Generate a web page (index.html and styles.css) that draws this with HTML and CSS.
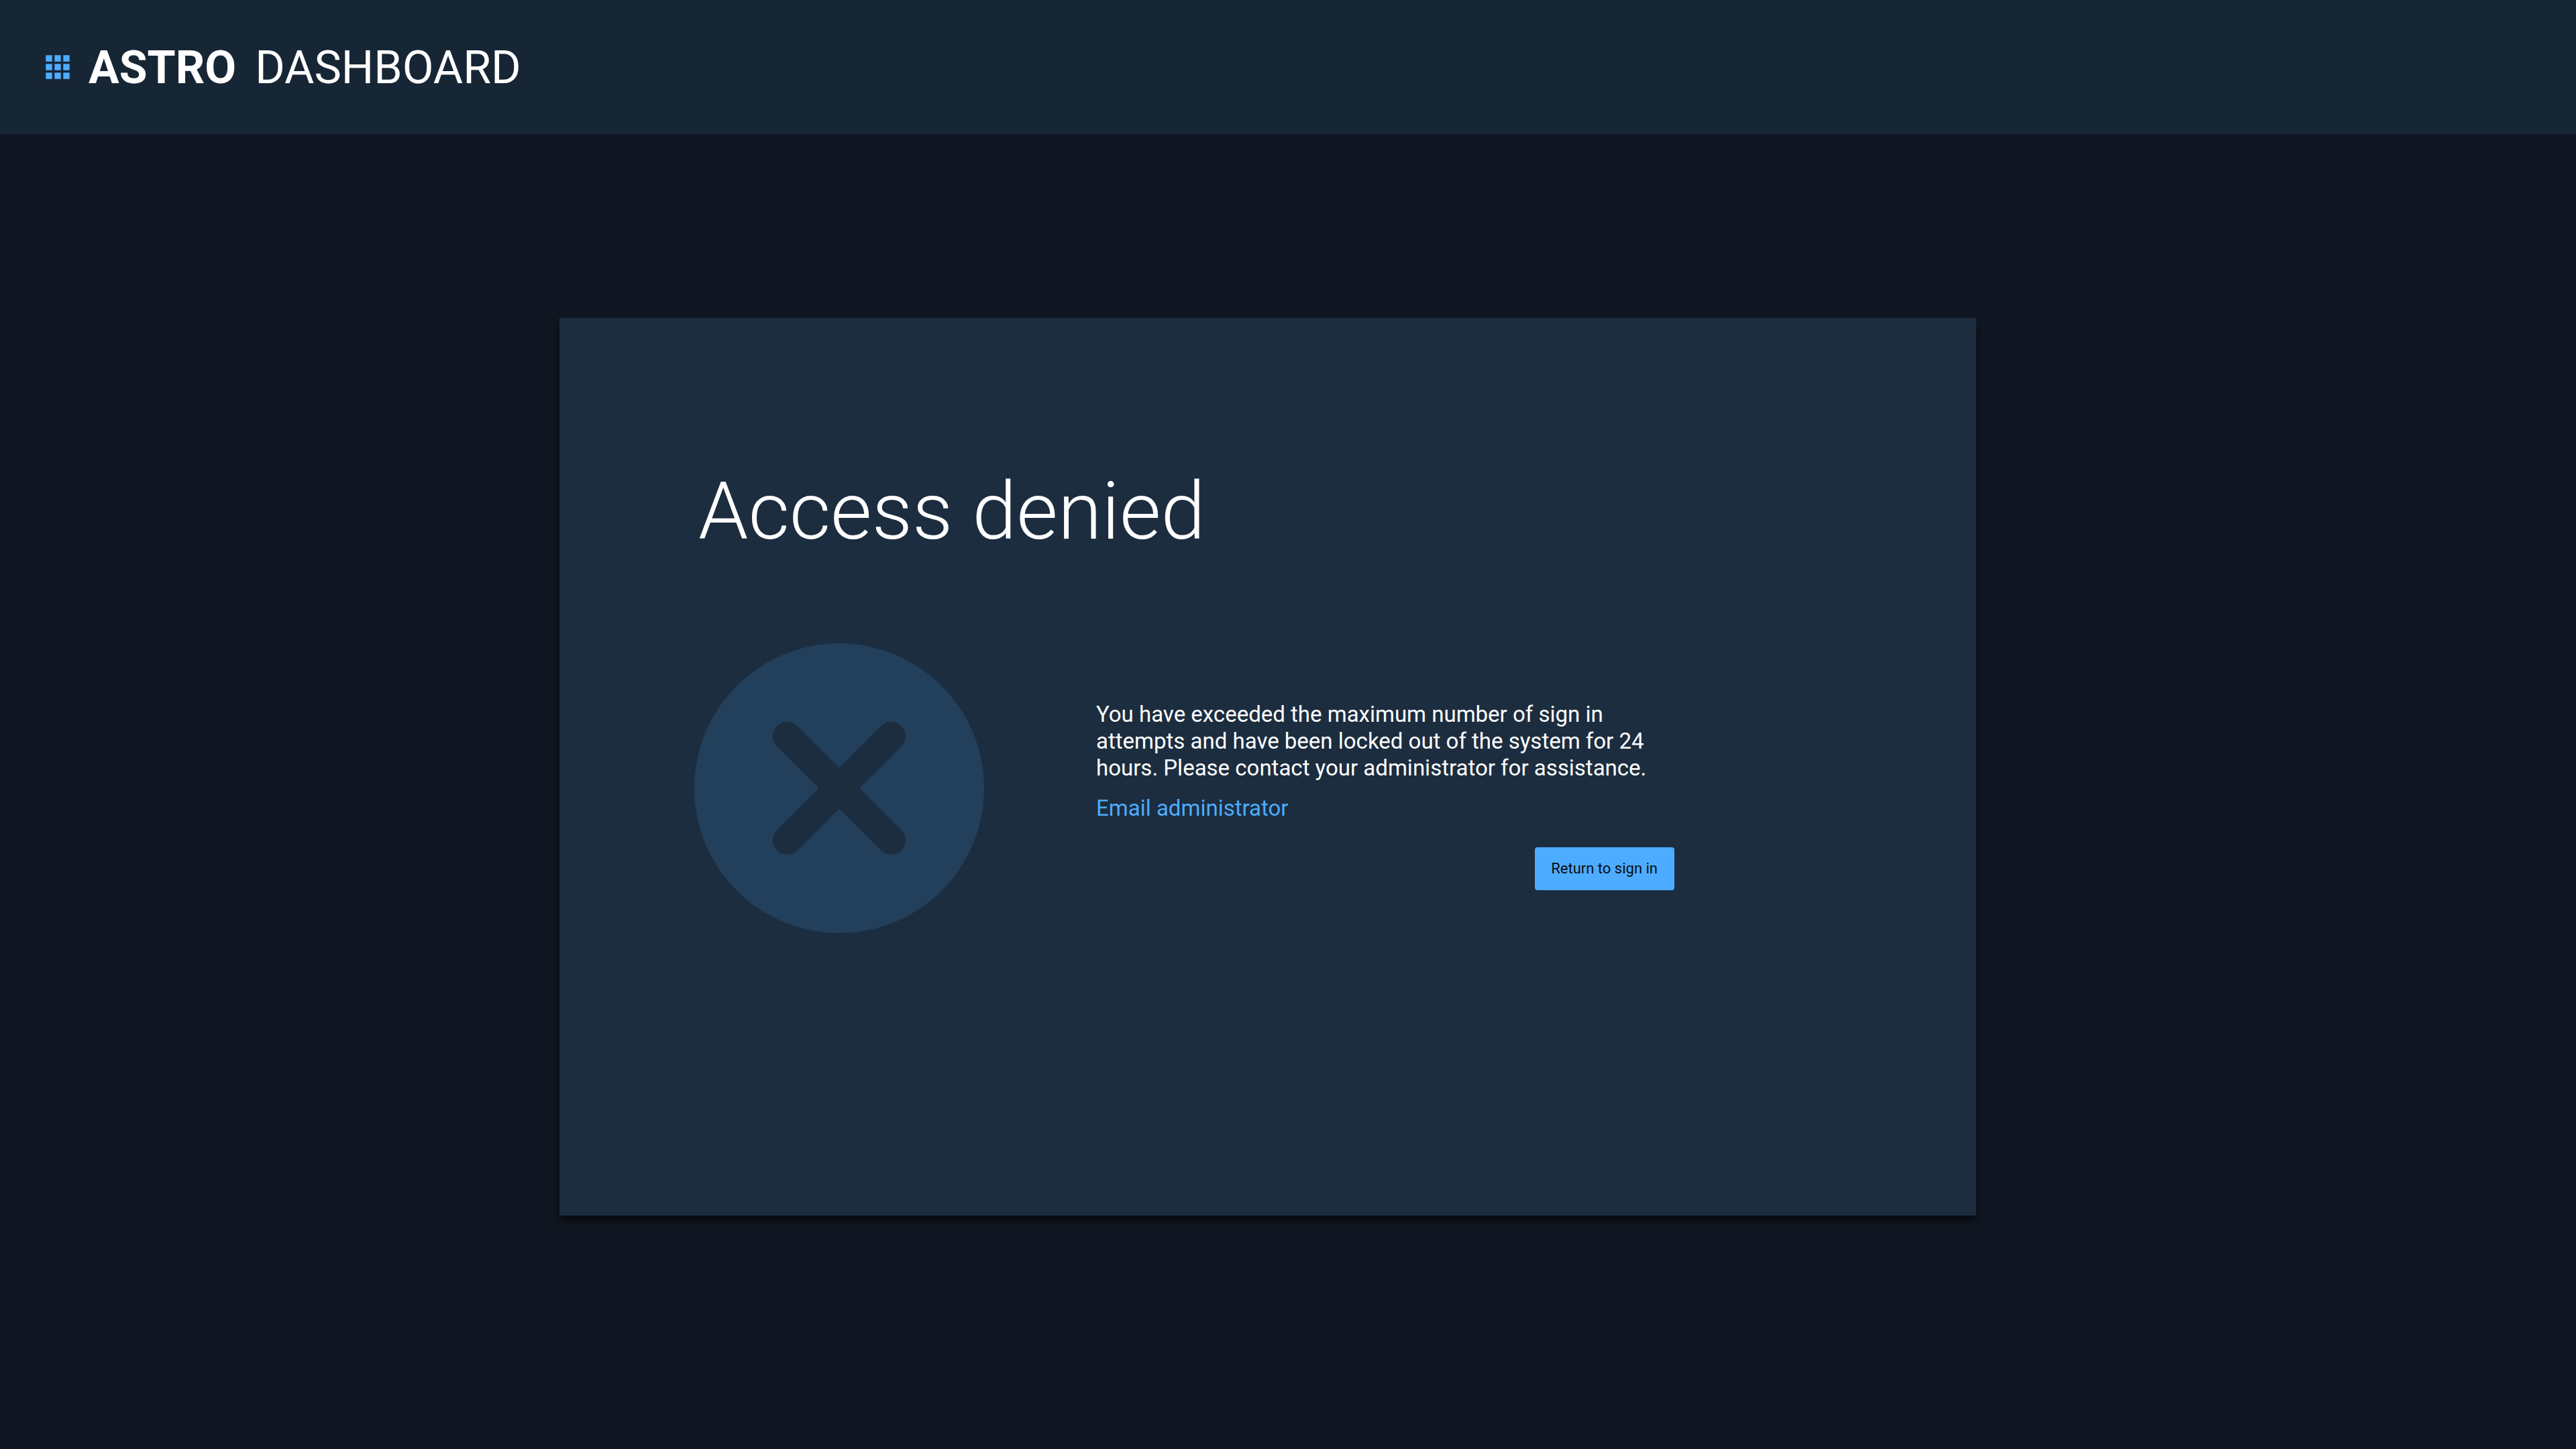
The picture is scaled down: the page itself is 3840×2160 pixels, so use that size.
FILE: index.html
```html
<!DOCTYPE html>
<html lang="en">
<head>
<meta charset="utf-8">
<title>Astro Dashboard</title>
<link rel="stylesheet" href="styles.css">
</head>
<body>
<header class="app-bar">
  <svg class="app-bar__icon" viewBox="0 0 36 36" aria-hidden="true">
    <path d="M.3.3h9.400v9.400H.3zM13.300.3h9.400v9.400h-9.400zM26.300.3h9.400v9.400h-9.400zM.3 13.300h9.400v9.400H.3zM13.300 13.300h9.400v9.400h-9.400zM26.300 13.300h9.400v9.400h-9.400zM.3 26.300h9.400v9.400H.3zM13.300 26.300h9.400v9.400h-9.400zM26.300 26.300h9.400v9.400h-9.400z"/>
  </svg>
  <div class="app-bar__title"><strong class="app-bar__name">ASTRO</strong><span>DASHBOARD</span></div>
</header>
<main class="page">
  <section class="card">
    <h1 class="card__title">Access denied</h1>
    <div class="card__body">
      <svg class="card__icon" viewBox="0 0 432 432" aria-hidden="true">
        <circle class="card__disc" cx="216" cy="216" r="216"/>
        <path class="card__cross" d="M138.500 138.500l155 155M293.500 138.500l-155 155"/>
      </svg>
      <div class="message">
        <p class="message__text">You have exceeded the maximum number of sign in attempts and have been locked out of the system for 24 hours. Please contact your administrator for assistance.</p>
        <a class="message__link" href="#email">Email administrator</a>
        <button class="button" type="button">Return to sign in</button>
      </div>
    </div>
  </section>
</main>
</body>
</html>
```
FILE: styles.css
```css
* {
  box-sizing: border-box;
}

body {
  margin: 0;
  min-height: 100vh;
  display: flex;
  flex-direction: column;
  background: #111722;
  color: #fff;
  font-family: Roboto, "Liberation Sans", sans-serif;
}

.app-bar {
  display: flex;
  align-items: center;
  gap: 28px;
  padding: 60px 68px;
  background: #172635;
}

.app-bar__icon {
  width: 36px;
  height: 36px;
  fill: #4dacff;
}

.app-bar__title {
  display: flex;
  gap: 28px;
  padding-top: 2px;
  font-size: 68px;
  line-height: 78px;
}

.app-bar__name {
  font-weight: 700;
}

.page {
  flex: 1;
  padding: 274px 0;
}

/* The card sits a little left of the window's centre. */
.card {
  width: 55%;
  margin-left: calc(22.5% - 30px);
  padding: 219px 201px 421px;
  background: #1c2d3f;
  box-shadow: 0 8px 12px rgba(0, 0, 0, 0.65);
}

.card__title {
  margin: 0 0 126px 6px;
  font-size: 119px;
  font-weight: 300;
  line-height: 140px;
}

.card__body {
  display: flex;
  align-items: center;
  gap: 167px;
}

.card__icon {
  flex: none;
  width: 432px;
  height: 432px;
}

.card__disc {
  fill: #223f5b;
}

.card__cross {
  fill: none;
  stroke: #1c2d3f;
  stroke-width: 43;
  stroke-linecap: round;
}

.message {
  display: flex;
  flex-direction: column;
  flex: 0 1 862px;
  padding-top: 22px;
  font-size: 33px;
  line-height: 40px;
}

.message__text {
  margin: 0 0 20px;
}

.message__link {
  align-self: flex-start;
  color: #4dacff;
  text-decoration: none;
}

.button {
  align-self: flex-end;
  height: 64px;
  margin-top: 38px;
  padding: 0 25px 0 24px;
  border: 0;
  border-radius: 4px;
  background: #4dacff;
  color: #080c11;
  font: 22px/24px Roboto, "Liberation Sans", sans-serif;
}
```
